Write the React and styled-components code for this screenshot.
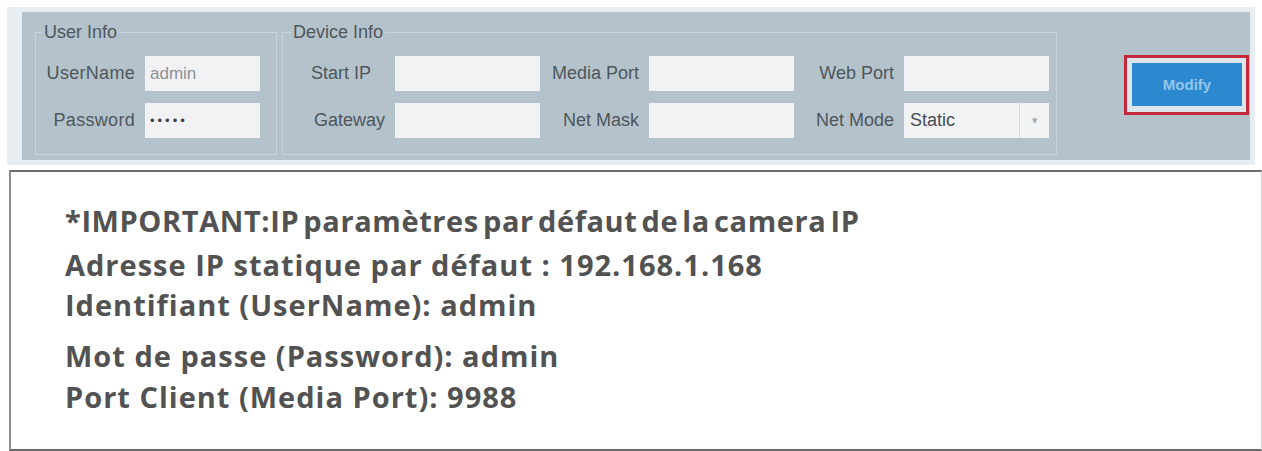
import React from 'react';
import styled, { createGlobalStyle } from 'styled-components';

const GlobalStyle = createGlobalStyle`
  body {
    margin: 0;
    background: #ffffff;
  }
`;

const App = () => (
  <Page>
    <GlobalStyle />
    <Frame>
      <Panel>
        <Group width={242} padLeft={8} padRight={16}>
          <Legend>User Info</Legend>
          <UserRows>
            <Field>
              <Label width={91}>UserName</Label>
              <TextBox width={115} readOnly value="admin" />
            </Field>
            <Field>
              <Label width={91}>Password</Label>
              <TextBox width={115} readOnly type="password" value="admin" dark />
            </Field>
          </UserRows>
        </Group>
        <Group width={775} padLeft={10} padRight={7} style={{ marginLeft: 5 }}>
          <Legend>Device Info</Legend>
          <DeviceGrid>
            <GridLabel pad={24}>Start IP</GridLabel>
            <TextBox readOnly value="" />
            <GridLabel>Media Port</GridLabel>
            <TextBox readOnly value="" />
            <GridLabel>Web Port</GridLabel>
            <TextBox readOnly value="" />
            <GridLabel pad={10}>Gateway</GridLabel>
            <TextBox readOnly value="" />
            <GridLabel>Net Mask</GridLabel>
            <TextBox readOnly value="" />
            <GridLabel>Net Mode</GridLabel>
            <Select>
              <SelectValue>Static</SelectValue>
              <SelectArrow>▾</SelectArrow>
            </Select>
          </DeviceGrid>
        </Group>
        <Highlight>
          <ModifyButton>Modify</ModifyButton>
        </Highlight>
      </Panel>
    </Frame>
    <Notice>
      <Line tight>*IMPORTANT:IP paramètres par défaut de la camera IP</Line>
      <Line>Adresse IP statique par défaut : 192.168.1.168</Line>
      <Line shift={-4}>Identifiant (UserName): admin</Line>
      <Line shift={7}>Mot de passe (Password): admin</Line>
      <Line shift={-3}>Port Client (Media Port): 9988</Line>
    </Notice>
  </Page>
);

export default App;

const Page = styled.div`
  padding: 7px 0 0 7px;
  width: 1262px;
  box-sizing: border-box;
`;

const Frame = styled.div`
  width: 1248px;
  box-sizing: border-box;
  padding: 5px 5px 5px 15px;
  background: #e7edf0;
`;

const Panel = styled.div`
  display: flex;
  align-items: flex-start;
  padding: 10px 1px 5px 13px;
  background: #b4c3cb;
  font-family: "Liberation Sans", Arial, sans-serif;
  color: #4e565c;
`;

const Group = styled.fieldset`
  box-sizing: border-box;
  width: ${(p) => p.width}px;
  margin: 0;
  padding: 14px ${(p) => p.padRight}px 16px ${(p) => p.padLeft}px;
  border: 1px solid #c9d4da;
  min-width: 0;
`;

const Legend = styled.legend`
  padding: 0 2px;
  margin-left: -2px;
  font-size: 18px;
  line-height: 20px;
  color: #4e565c;
`;

const UserRows = styled.div`
  display: flex;
  flex-direction: column;
  gap: 12px;
`;

const Field = styled.div`
  display: flex;
  align-items: center;
  gap: 10px;
`;

const Label = styled.span`
  width: ${(p) => p.width}px;
  text-align: right;
  font-size: 18px;
  letter-spacing: 0.3px;
  white-space: nowrap;
`;

const TextBox = styled.input`
  box-sizing: border-box;
  width: ${(p) => (p.width ? `${p.width}px` : '100%')};
  height: 35px;
  margin: 0;
  padding: 0 5px;
  border: none;
  outline: none;
  background: #f2f2f4;
  font-family: "Liberation Sans", Arial, sans-serif;
  font-size: ${(p) => (p.dark ? '13px' : '17px')};
  letter-spacing: ${(p) => (p.dark ? '3px' : '0')};
  color: ${(p) => (p.dark ? '#3a3f44' : '#8b9196')};
`;

const DeviceGrid = styled.div`
  display: grid;
  grid-template-columns: 102px 145px 109px 145px 110px 145px;
  grid-auto-rows: 35px;
  row-gap: 12px;
  align-items: center;
`;

const GridLabel = styled.span`
  text-align: right;
  padding-right: ${(p) => p.pad || 10}px;
  font-size: 18px;
  white-space: nowrap;
`;

const Select = styled.div`
  display: flex;
  height: 35px;
  background: #f2f3f5;
`;

const SelectValue = styled.span`
  flex: 1;
  display: flex;
  align-items: center;
  padding-left: 6px;
  font-size: 18px;
  color: #464c51;
`;

const SelectArrow = styled.span`
  width: 29px;
  display: flex;
  align-items: center;
  justify-content: center;
  border-left: 1px solid #d3d8dc;
  font-size: 11px;
  color: #a7adb2;
`;

const Highlight = styled.div`
  margin: 33px 0 0 auto;
  box-sizing: border-box;
  width: 125px;
  height: 60px;
  padding: 5px 4px 6px 5px;
  border: 3px solid #c4283b;
  background: #dce5ea;
`;

const ModifyButton = styled.div`
  height: 100%;
  display: flex;
  align-items: center;
  justify-content: center;
  background: #2c89d0;
  font-family: "Liberation Sans", Arial, sans-serif;
  font-size: 15px;
  font-weight: bold;
  color: #94c6ec;
`;

const Notice = styled.div`
  margin: 5px 0 0 2px;
  box-sizing: border-box;
  width: 1253px;
  height: 281px;
  padding: 27px 0 0 54px;
  border: 2px solid #8d8d8d;
  border-top-color: #6e6e6e;
  border-bottom-color: #6a6a6a;
  border-right: 1px solid #cfcfcf;
  background: #ffffff;
  font-family: "Open Sans", Lato, sans-serif;
  font-weight: 700;
  font-size: 29px;
  line-height: 44px;
  letter-spacing: 1px;
  color: #525252;
`;

const Line = styled.div`
  margin-top: ${(p) => p.shift || 0}px;
  white-space: nowrap;
  letter-spacing: ${(p) => (p.tight ? '0.6px' : 'inherit')};
  word-spacing: ${(p) => (p.tight ? '-4px' : '0')};
`;
